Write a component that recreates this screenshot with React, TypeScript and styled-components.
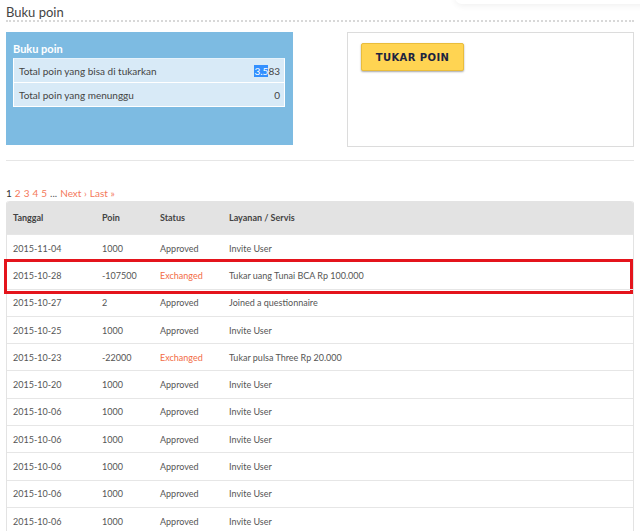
import React from 'react'
import styled, { createGlobalStyle } from 'styled-components'

const GlobalStyle = createGlobalStyle`
  body {
    margin: 0;
    background: #fff;
    font-family: Lato, "Open Sans", sans-serif;
    color: #555;
  }
`

type Entry = { date: string; poin: string; status: 'Approved' | 'Exchanged'; service: string; marked?: boolean }

const rows: Entry[] = [
  { date: '2015-11-04', poin: '1000', status: 'Approved', service: 'Invite User' },
  { date: '2015-10-28', poin: '-107500', status: 'Exchanged', service: 'Tukar uang Tunai BCA Rp 100.000', marked: true },
  { date: '2015-10-27', poin: '2', status: 'Approved', service: 'Joined a questionnaire' },
  { date: '2015-10-25', poin: '1000', status: 'Approved', service: 'Invite User' },
  { date: '2015-10-23', poin: '-22000', status: 'Exchanged', service: 'Tukar pulsa Three Rp 20.000' },
  { date: '2015-10-20', poin: '1000', status: 'Approved', service: 'Invite User' },
  { date: '2015-10-06', poin: '1000', status: 'Approved', service: 'Invite User' },
  { date: '2015-10-06', poin: '1000', status: 'Approved', service: 'Invite User' },
  { date: '2015-10-06', poin: '1000', status: 'Approved', service: 'Invite User' },
  { date: '2015-10-06', poin: '1000', status: 'Approved', service: 'Invite User' },
  { date: '2015-10-06', poin: '1000', status: 'Approved', service: 'Invite User' },
]

const App = () => {
  return (
    <>
      <GlobalStyle />
      <Page>
        <TopShadow />
        <Title>Buku poin</Title>
        <Summary>
          <BlueBox>
            <BoxTitle>Buku poin</BoxTitle>
            <PointTable>
              <PointRow>
                <span>Total poin yang bisa di tukarkan</span>
                <span><Selected>3.5</Selected>83</span>
              </PointRow>
              <PointRow>
                <span>Total poin yang menunggu</span>
                <span>0</span>
              </PointRow>
            </PointTable>
          </BlueBox>
          <ActionBox>
            <TukarButton>TUKAR POIN</TukarButton>
          </ActionBox>
        </Summary>
        <Divider />
        <Pager>
          <Current>1</Current>
          <PageLink>2</PageLink>
          <PageLink>3</PageLink>
          <PageLink>4</PageLink>
          <PageLink>5</PageLink>
          <Dots>...</Dots>
          <PageLink>Next ›</PageLink>
          <PageLink>Last »</PageLink>
        </Pager>
        <History>
          <HeadRow>
            <span>Tanggal</span>
            <span>Poin</span>
            <span>Status</span>
            <span>Layanan / Servis</span>
          </HeadRow>
          {rows.map((r, i) => (
            <Row key={i} $marked={r.marked}>
              <span>{r.date}</span>
              <span>{r.poin}</span>
              <Status $exchanged={r.status === 'Exchanged'}>{r.status}</Status>
              <span>{r.service}</span>
            </Row>
          ))}
        </History>
      </Page>
    </>
  )
}

export default App

const Page = styled.div`
  position: relative;
  padding: 6px 6px 0 6px;
  height: 531px;
  overflow: hidden;
  box-sizing: border-box;
`

const TopShadow = styled.div`
  position: absolute;
  top: -10px;
  left: 455px;
  right: -20px;
  height: 14px;
  border-radius: 10px;
  box-shadow: 0 2px 6px rgba(0,0,0,0.06);
`

const Title = styled.h1`
  margin: 0;
  font-size: 13px;
  font-weight: normal;
  color: #444;
  line-height: 13px;
  padding-bottom: 1px;
  border-bottom: 2px dotted #d8d8d8;
`

const Summary = styled.div`
  display: flex;
  justify-content: space-between;
  margin-top: 10px;
`

const BlueBox = styled.div`
  width: 287px;
  height: 113px;
  background: #7dbbe2;
  padding: 10px 8px 0 7px;
  box-sizing: border-box;
`

const BoxTitle = styled.div`
  color: #fff;
  font-weight: bold;
  font-size: 11px;
  line-height: 14px;
  margin-bottom: 2px;
`

const PointTable = styled.div`
  background: #d8eaf7;
  border: 1px solid #fff;
  border-top: 1px solid #e6f2fb;
`

const PointRow = styled.div`
  display: flex;
  justify-content: space-between;
  height: 23px;
  align-items: center;
  padding: 0 4px 0 5px;
  font-size: 10px;
  color: #444;
  & + & { border-top: 1px solid #fff; }
`

const Selected = styled.span`
  background: #3390ff;
  color: #fff;
`

const ActionBox = styled.div`
  width: 287px;
  height: 115px;
  border: 1px solid #dcdcdc;
  box-sizing: border-box;
  padding: 10px 13px;
`

const TukarButton = styled.button`
  width: 103px;
  height: 28px;
  background: #ffd452;
  border: 1px solid #e9bd3c;
  border-radius: 2px;
  box-shadow: 0 1px 2px rgba(0,0,0,0.35);
  font-family: "DejaVu Sans", Verdana, sans-serif;
  font-weight: bold;
  font-size: 10px;
  letter-spacing: 0.4px;
  color: #1c2340;
  cursor: pointer;
`

const Divider = styled.div`
  margin-top: 13px;
  border-top: 1px solid #e6e6e6;
`

const Pager = styled.div`
  margin-top: 26px;
  font-size: 10px;
  line-height: 13px;
  display: flex;
  gap: 3px;
`

const Current = styled.span`
  color: #333;
`

const PageLink = styled.span`
  color: #f4785a;
`

const Dots = styled.span`
  color: #555;
`

const History = styled.div`
  margin-top: 1px;
  border-left: 1px solid #e3e3e3;
  border-right: 1px solid #e3e3e3;
  border-top-right-radius: 3px;
  border-top-left-radius: 3px;
`

const Cells = styled.div`
  display: grid;
  grid-template-columns: 89px 58px 69px 1fr;
  align-items: center;
  padding-left: 6px;
  font-size: 9px;
`

const HeadRow = styled(Cells)`
  height: 33px;
  background: #e3e3e3;
  font-weight: bold;
  color: #444;
  border-top-right-radius: 3px;
  border-top-left-radius: 3px;
`

const Row = styled(Cells)<{ $marked?: boolean }>`
  position: relative;
  height: 27.3px;
  box-sizing: border-box;
  border-top: 1px solid #e6e6e6;
  color: #555;
  &::after {
    content: '';
    display: ${p => (p.$marked ? 'block' : 'none')};
    position: absolute;
    left: -3px;
    right: 0px;
    top: -3px;
    bottom: -5px;
    border: 3px solid #e4141c;
  }
`

const Status = styled.span<{ $exchanged?: boolean }>`
  color: ${p => (p.$exchanged ? '#f26b45' : '#555')};
`
